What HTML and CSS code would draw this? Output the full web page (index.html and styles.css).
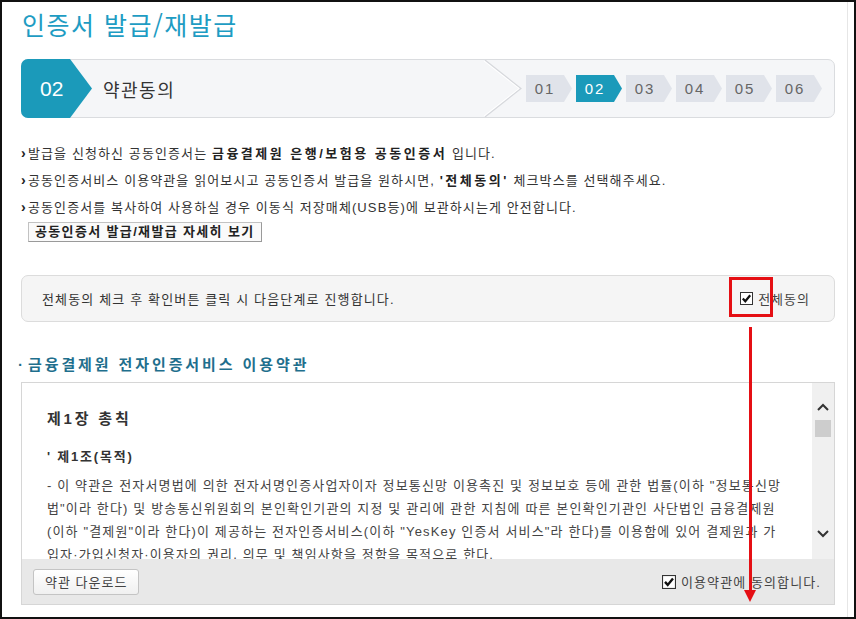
FILE: index.html
```html
<!DOCTYPE html>
<html lang="ko">

<head>
    <meta charset="UTF-8">
    <meta name="viewport" content="width=device-width, initial-scale=1.0">
    <title>인증서 발급/재발급</title>
    <link rel="stylesheet" href="styles.css">
</head>

<body>
    <div class="page">
        <h1 class="title">인증서 발급/재발급</h1>

        <div class="stepbar">
            <div class="step-current">02</div>
            <div class="step-name">약관동의</div>
            <svg class="step-sep" width="40" height="57" viewBox="0 0 40 57">
                <polyline points="1,0 37,28.5 1,57" fill="none" stroke="#d6d8dc" stroke-width="1.2" />
                <polyline points="0,1 35,28.5 0,56" fill="none" stroke="#ffffff" stroke-width="1" />
            </svg>
            <ol class="steps">
                <li>01</li>
                <li class="on">02</li>
                <li>03</li>
                <li>04</li>
                <li>05</li>
                <li>06</li>
            </ol>
        </div>

        <ul class="notice">
            <li>발급을 신청하신 공동인증서는 <b>금융결제원 은행/보험용 공동인증서</b> 입니다.</li>
            <li>공동인증서비스 이용약관을 읽어보시고 공동인증서 발급을 원하시면, <b>'전체동의'</b> 체크박스를 선택해주세요.</li>
            <li>공동인증서를 복사하여 사용하실 경우 이동식 저장매체(USB등)에 보관하시는게 안전합니다.</li>
        </ul>
        <button class="btn-detail">공동인증서 발급/재발급 자세히 보기</button>

        <div class="agree-all">
            <p>전체동의 체크 후 확인버튼 클릭 시 다음단계로 진행합니다.</p>
            <label class="check">
                <svg width="13" height="13" viewBox="0 0 13 13">
                    <rect x="0.5" y="0.5" width="12" height="12" fill="#fff" stroke="#333" />
                    <path d="M2.8 6.4 L5.3 9.2 L10.2 3.2" fill="none" stroke="#111" stroke-width="2.2" />
                </svg>
                전체동의
            </label>
        </div>

        <h2 class="terms-title"><span class="dot">·</span>금융결제원 전자인증서비스 이용약관</h2>

        <div class="terms">
            <div class="terms-body">
                <div class="terms-text">
                    <h3>제1장 총칙</h3>
                    <h4>' 제1조(목적)</h4>
                    <p>- 이 약관은 전자서명법에 의한 전자서명인증사업자이자 정보통신망 이용촉진 및 정보보호 등에 관한 법률(이하 "정보통신망<br>법"이라 한다) 및 방송통신위원회의 본인확인기관의 지정 및 관리에 관한 지침에 따른 본인확인기관인 사단법인 금융결제원<br>(이하 "결제원"이라 한다)이 제공하는 전자인증서비스(이하 "YesKey 인증서 서비스"라 한다)를 이용함에 있어 결제원과 가<br>입자·가입신청자·이용자의 권리, 의무 및 책임사항을 정함을 목적으로 한다.</p>
                </div>
                <div class="scrollbar">
                    <svg width="12" height="8" viewBox="0 0 12 8">
                        <polyline points="1,7 6,2 11,7" fill="none" stroke="#333" stroke-width="2" />
                    </svg>
                    <div class="thumb"></div>
                    <div class="track"></div>
                    <svg width="12" height="8" viewBox="0 0 12 8">
                        <polyline points="1,1 6,6 11,1" fill="none" stroke="#333" stroke-width="2" />
                    </svg>
                </div>
            </div>
            <div class="terms-foot">
                <button class="btn-down">약관 다운로드</button>
                <label class="check">
                    <svg width="14" height="14" viewBox="0 0 13 13">
                        <rect x="0.5" y="0.5" width="12" height="12" fill="#fff" stroke="#333" />
                        <path d="M2.8 6.4 L5.3 9.2 L10.2 3.2" fill="none" stroke="#111" stroke-width="2.2" />
                    </svg>
                    이용약관에 동의합니다.
                </label>
            </div>
        </div>

        <!-- red annotation drawn over the page -->
        <div class="mark-box"></div>
        <div class="mark-line"></div>
        <div class="mark-head"></div>
    </div>
</body>

</html>
```

FILE: styles.css
```css
body {
    margin: 0;
    background-color: #fff;
    font-family: "Liberation Sans", "Noto Sans CJK KR", sans-serif;
    color: #333;
}

.page {
    position: relative;
    width: 856px;
    height: 619px;
    box-sizing: border-box;
    border: 2px solid #111;
    padding: 0 19px;
    background-color: #fff;
    box-shadow: inset -6px 0 0 #fff, inset -7px 0 0 #e6e6e6;
    overflow: hidden;
}

.title {
    margin: 6px 0 0 1px;
    font-family: "Noto Sans CJK KR", sans-serif;
    font-size: 25px;
    line-height: 32px;
    font-weight: 400;
    letter-spacing: 1.5px;
    color: #1e9cc3;
}

/* step bar */
.stepbar {
    display: flex;
    align-items: center;
    margin-top: 19px;
    height: 59px;
    box-sizing: border-box;
    border: 1px solid #dadcdf;
    border-radius: 7px;
    background-color: #f5f6f8;
}

.step-current {
    align-self: stretch;
    width: 71px;
    margin: -1px 0 -1px -1px;
    padding-left: 19px;
    box-sizing: border-box;
    display: flex;
    align-items: center;
    background-color: #1b9aba;
    border-radius: 7px 0 0 7px;
    clip-path: polygon(0 0, 49px 0, 71px 50%, 49px 100%, 0 100%);
    color: #fff;
    font-size: 21px;
}

.step-name {
    flex: 1;
    margin-left: 11px;
    font-family: "Noto Sans CJK KR", sans-serif;
    font-size: 18px;
    letter-spacing: 1.5px;
    color: #333;
}

.step-sep {
    margin-right: 2px;
}

.steps {
    display: flex;
    gap: 4px;
    margin: 0;
    padding: 0 12px 0 0;
    list-style: none;
}

.steps li {
    width: 46px;
    height: 27px;
    padding-right: 8px;
    box-sizing: border-box;
    display: flex;
    align-items: center;
    justify-content: center;
    background-color: #e0e3ea;
    clip-path: polygon(0 0, 38px 0, 46px 50%, 38px 100%, 0 100%);
    font-size: 15px;
    letter-spacing: 2px;
    color: #666;
}

.steps li.on {
    background-color: #1b9aba;
    color: #fff;
}

/* notices */
.notice {
    margin: 22px 0 0;
    padding: 0;
    list-style: none;
    font-size: 13px;
    line-height: 26px;
    letter-spacing: 1.1px;
}

.notice li::before {
    content: "›";
    display: inline-block;
    width: 7px;
    font-weight: bold;
    font-size: 14px;
    letter-spacing: 0;
    color: #222;
}

.notice b {
    letter-spacing: 2.5px;
    color: #222;
}

.btn-detail {
    display: block;
    margin: 1px 0 0 7px;
    height: 20px;
    padding: 0 6px;
    border: 1px solid #c2c2c2;
    border-right-color: #9a9a9a;
    border-bottom-color: #9a9a9a;
    background-color: #fafafa;
    font-family: inherit;
    font-size: 13px;
    font-weight: bold;
    letter-spacing: 1.35px;
    line-height: 18px;
    color: #222;
}

/* agree all */
.agree-all {
    display: flex;
    align-items: center;
    justify-content: space-between;
    margin-top: 33px;
    height: 47px;
    box-sizing: border-box;
    padding: 0 24px 0 20px;
    border: 1px solid #dcdcdc;
    border-radius: 7px;
    background-color: #f5f5f5;
}

.agree-all p {
    margin: 0;
    font-size: 13px;
    letter-spacing: 1.15px;
}

.check {
    display: flex;
    align-items: center;
    gap: 5px;
    font-size: 13px;
    letter-spacing: 1px;
    color: #444;
}

/* terms */
.terms-title {
    margin: 33px 0 0 -3px;
    font-size: 15px;
    line-height: 20px;
    letter-spacing: 2.9px;
    color: #1f6f8d;
}

.terms-title .dot {
    margin-right: 5px;
    letter-spacing: 0;
}

.terms {
    margin-top: 7px;
    height: 223px;
    box-sizing: border-box;
    border: 1px solid #d6d6d6;
}

.terms-body {
    display: flex;
    height: 176px;
    background-color: #fff;
}

.terms-text {
    flex: 1;
    padding: 25px 0 0 25px;
    overflow: hidden;
}

.terms-text h3 {
    margin: 0;
    font-size: 15px;
    line-height: 22px;
    letter-spacing: 2.8px;
    color: #333;
}

.terms-text h4 {
    margin: 16px 0 0;
    font-size: 13px;
    line-height: 22px;
    letter-spacing: 1.8px;
    color: #333;
}

.terms-text p {
    margin: 6px 0 0;
    font-size: 13px;
    line-height: 23px;
    letter-spacing: 1.15px;
    white-space: nowrap;
    color: #444;
}

.scrollbar {
    width: 22px;
    display: flex;
    flex-direction: column;
    align-items: center;
    padding: 20px 0 21px;
    box-sizing: border-box;
    background-color: #f0f0f0;
}

.scrollbar .thumb {
    width: 16px;
    height: 17px;
    margin-top: 9px;
    background-color: #cdcdcd;
}

.scrollbar .track {
    flex: 1;
}

.terms-foot {
    display: flex;
    align-items: center;
    justify-content: space-between;
    height: 45px;
    padding: 0 13px 0 11px;
    background-color: #e8e8e8;
}

.btn-down {
    height: 26px;
    padding: 0 11px;
    border: 1px solid #c4c4c4;
    border-radius: 3px;
    background: linear-gradient(#ffffff, #f0f0f0);
    font-family: inherit;
    font-size: 13px;
    letter-spacing: 1px;
    color: #444;
}

.terms-foot .check {
    letter-spacing: 1.1px;
}

/* red annotation */
.mark-box {
    position: absolute;
    left: 727px;
    top: 275px;
    width: 44px;
    height: 40px;
    box-sizing: border-box;
    border: 3px solid #e50f14;
}

.mark-line {
    position: absolute;
    left: 747px;
    top: 325px;
    width: 3px;
    height: 266px;
    background-color: #e50f14;
}

.mark-head {
    position: absolute;
    left: 742px;
    top: 588px;
    width: 0;
    height: 0;
    border-left: 6px solid transparent;
    border-right: 6px solid transparent;
    border-top: 12px solid #e50f14;
}
```
